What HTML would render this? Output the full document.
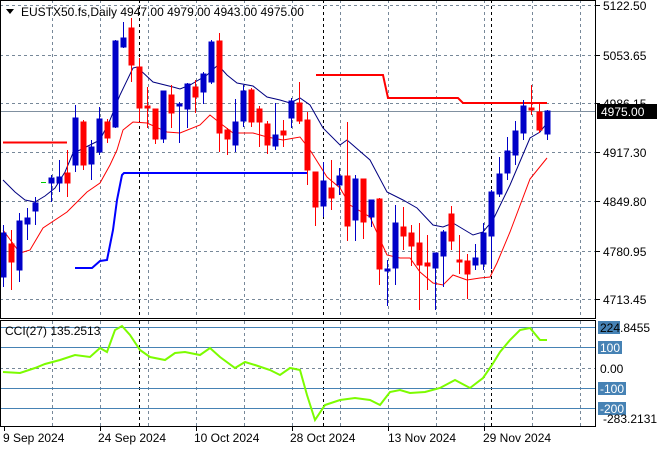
<!DOCTYPE html>
<html><head><meta charset="utf-8"><style>
body{margin:0;background:#fff;width:660px;height:450px;overflow:hidden;font-family:"Liberation Sans",sans-serif}
svg text{font-family:"Liberation Sans",sans-serif;font-size:12px;fill:#000}
</style></head><body>
<svg width="660" height="450" xmlns="http://www.w3.org/2000/svg">
<rect width="660" height="450" fill="#fff"/>
<g stroke="#778899" stroke-dasharray="3,3" stroke-width="1">
<line x1="52.5" y1="0" x2="52.5" y2="318"/><line x1="100.5" y1="0" x2="100.5" y2="318"/><line x1="148.5" y1="0" x2="148.5" y2="318"/><line x1="196.5" y1="0" x2="196.5" y2="318"/><line x1="244.5" y1="0" x2="244.5" y2="318"/><line x1="292.5" y1="0" x2="292.5" y2="318"/><line x1="340.5" y1="0" x2="340.5" y2="318"/><line x1="388.5" y1="0" x2="388.5" y2="318"/><line x1="436.5" y1="0" x2="436.5" y2="318"/><line x1="484.5" y1="0" x2="484.5" y2="318"/><line x1="532.5" y1="0" x2="532.5" y2="318"/><line x1="580.5" y1="0" x2="580.5" y2="318"/>
<line x1="52.5" y1="321" x2="52.5" y2="426"/><line x1="100.5" y1="321" x2="100.5" y2="426"/><line x1="148.5" y1="321" x2="148.5" y2="426"/><line x1="196.5" y1="321" x2="196.5" y2="426"/><line x1="244.5" y1="321" x2="244.5" y2="426"/><line x1="292.5" y1="321" x2="292.5" y2="426"/><line x1="340.5" y1="321" x2="340.5" y2="426"/><line x1="388.5" y1="321" x2="388.5" y2="426"/><line x1="436.5" y1="321" x2="436.5" y2="426"/><line x1="484.5" y1="321" x2="484.5" y2="426"/><line x1="532.5" y1="321" x2="532.5" y2="426"/><line x1="580.5" y1="321" x2="580.5" y2="426"/>
<line x1="0" y1="5.5" x2="596" y2="5.5"/><line x1="0" y1="55.5" x2="596" y2="55.5"/><line x1="0" y1="103.5" x2="596" y2="103.5"/><line x1="0" y1="152.5" x2="596" y2="152.5"/><line x1="0" y1="201.5" x2="596" y2="201.5"/><line x1="0" y1="251.5" x2="596" y2="251.5"/><line x1="0" y1="299.5" x2="596" y2="299.5"/>
<line x1="0" y1="368.5" x2="596" y2="368.5"/>
</g>
<g stroke="#000" stroke-dasharray="3,3" stroke-width="1">
<line x1="139.5" y1="0" x2="139.5" y2="318"/><line x1="323.5" y1="0" x2="323.5" y2="318"/><line x1="491.5" y1="0" x2="491.5" y2="318"/>
<line x1="139.5" y1="321" x2="139.5" y2="426"/><line x1="323.5" y1="321" x2="323.5" y2="426"/><line x1="491.5" y1="321" x2="491.5" y2="426"/>
</g>
<line x1="0" y1="111.5" x2="596" y2="111.5" stroke="#8090a0"/>
<g stroke="#4682b4"><line x1="0" y1="327.5" x2="596" y2="327.5"/><line x1="0" y1="347.5" x2="596" y2="347.5"/><line x1="0" y1="388.5" x2="596" y2="388.5"/><line x1="0" y1="408.5" x2="596" y2="408.5"/></g>
<!-- step lines -->
<polyline points="3,142.5 67,142.5" stroke="#f00" stroke-width="2" fill="none"/>
<polyline points="316,75 383,75 388,98 458,98 463,103 547,103" stroke="#f00" stroke-width="2" fill="none"/>
<polyline points="75,268 92,268 100,261 107,260 110,245 113,230 117,200 120,185 122,175 124,173 307,173" stroke="#00f" stroke-width="2" fill="none"/>
<!-- MAs -->
<polyline fill="none" stroke="#000080" stroke-width="1" points="3,180 15,192 25,200 35,202 45,196 55,188 65,172 73,153 80,150 90,145 100,140 110,120 120,95 133,68 137,67 153,82 173,87 180,89 190,85 207,75 218,65 227,75 237,83 253,86 267,97 280,100 290,103 300,98 310,105 323,128 340,145 347,140 370,160 387,192 403,200 417,208 433,225 443,227 453,223 473,235 483,232 493,220 510,185 530,138 540,132 547,123"/>
<polyline fill="none" stroke="#f00" stroke-width="1" points="3,230 20,253 30,250 43,228 67,212 87,192 100,183 110,165 117,150 123,130 133,122 147,123 167,132 180,133 200,125 210,115 220,123 233,133 253,133 267,137 283,140 300,137 310,150 327,177 340,188 350,205 370,217 387,255 400,258 410,258 420,272 433,283 443,285 453,275 467,280 480,278 490,277 497,263 510,232 530,179 547,158"/>
<!-- candles -->
<g stroke-width="1">
<g stroke="#0000c8" fill="#0000c8">
<line x1="3.5" y1="225" x2="3.5" y2="287"/><rect x="1" y="233" width="5" height="44"/>
<line x1="19.5" y1="213" x2="19.5" y2="282"/><rect x="17" y="221" width="5" height="49"/>
<line x1="27.5" y1="208" x2="27.5" y2="240"/><rect x="25" y="218" width="5" height="6"/>
<line x1="35.5" y1="197" x2="35.5" y2="225"/><rect x="33" y="203" width="5" height="8"/>
<line x1="51.5" y1="175" x2="51.5" y2="202"/><rect x="49" y="178" width="5" height="5"/>
<line x1="59.5" y1="160" x2="59.5" y2="192"/><rect x="57" y="177" width="5" height="6"/>
<line x1="75.5" y1="105" x2="75.5" y2="172"/><rect x="73" y="118" width="5" height="47"/>
<line x1="91.5" y1="140" x2="91.5" y2="180"/><rect x="89" y="147" width="5" height="17"/>
<line x1="99.5" y1="107" x2="99.5" y2="155"/><rect x="97" y="119" width="5" height="33"/>
<line x1="115.5" y1="40" x2="115.5" y2="128"/><rect x="113" y="41" width="5" height="86"/>
<line x1="123.5" y1="22" x2="123.5" y2="48"/><rect x="121" y="38" width="5" height="9"/>
<line x1="163.5" y1="91" x2="163.5" y2="143"/><rect x="161" y="91" width="5" height="48"/>
<line x1="179.5" y1="102" x2="179.5" y2="143"/><rect x="177" y="104" width="5" height="2"/>
<line x1="187.5" y1="83" x2="187.5" y2="128"/><rect x="185" y="84" width="5" height="25"/>
<line x1="203.5" y1="72" x2="203.5" y2="104"/><rect x="201" y="74" width="5" height="18"/>
<line x1="211.5" y1="40" x2="211.5" y2="84"/><rect x="209" y="42" width="5" height="40"/>
<line x1="235.5" y1="99" x2="235.5" y2="152"/><rect x="233" y="122" width="5" height="23"/>
<line x1="243.5" y1="85" x2="243.5" y2="127"/><rect x="241" y="91" width="5" height="30"/>
<line x1="275.5" y1="103" x2="275.5" y2="150"/><rect x="273" y="135" width="5" height="11"/>
<line x1="291.5" y1="98" x2="291.5" y2="128"/><rect x="289" y="101" width="5" height="17"/>
<line x1="323.5" y1="162" x2="323.5" y2="217"/><rect x="321" y="181" width="5" height="25"/>
<line x1="339.5" y1="168" x2="339.5" y2="195"/><rect x="337" y="176" width="5" height="9"/>
<line x1="355.5" y1="175" x2="355.5" y2="241"/><rect x="353" y="179" width="5" height="41"/>
<line x1="371.5" y1="200" x2="371.5" y2="227"/><rect x="369" y="200" width="5" height="17"/>
<line x1="387.5" y1="260" x2="387.5" y2="306"/><rect x="385" y="269" width="5" height="2"/>
<line x1="395.5" y1="205" x2="395.5" y2="285"/><rect x="393" y="223" width="5" height="45"/>
<line x1="435.5" y1="253" x2="435.5" y2="310"/><rect x="433" y="253" width="5" height="15"/>
<line x1="443.5" y1="230" x2="443.5" y2="287"/><rect x="441" y="232" width="5" height="24"/>
<line x1="475.5" y1="244" x2="475.5" y2="270"/><rect x="473" y="258" width="5" height="7"/>
<line x1="483.5" y1="223" x2="483.5" y2="270"/><rect x="481" y="233" width="5" height="31"/>
<line x1="491.5" y1="190" x2="491.5" y2="269"/><rect x="489" y="192" width="5" height="44"/>
<line x1="499.5" y1="157" x2="499.5" y2="197"/><rect x="497" y="174" width="5" height="20"/>
<line x1="507.5" y1="137" x2="507.5" y2="180"/><rect x="505" y="151" width="5" height="22"/>
<line x1="515.5" y1="121" x2="515.5" y2="165"/><rect x="513" y="131" width="5" height="24"/>
<line x1="523.5" y1="100" x2="523.5" y2="140"/><rect x="521" y="106" width="5" height="27"/>
<line x1="547.5" y1="110" x2="547.5" y2="140"/><rect x="545" y="111" width="5" height="23"/>
</g>
<g stroke="#f00" fill="#f00">
<line x1="11.5" y1="230" x2="11.5" y2="290"/><rect x="9" y="244" width="5" height="18"/>
<line x1="67.5" y1="150" x2="67.5" y2="197"/><rect x="65" y="173" width="5" height="10"/>
<line x1="83.5" y1="120" x2="83.5" y2="170"/><rect x="81" y="122" width="5" height="43"/>
<line x1="107.5" y1="119" x2="107.5" y2="143"/><rect x="105" y="122" width="5" height="16"/>
<line x1="131.5" y1="18" x2="131.5" y2="82"/><rect x="129" y="28" width="5" height="37"/>
<line x1="139.5" y1="58" x2="139.5" y2="121"/><rect x="137" y="67" width="5" height="41"/>
<line x1="147.5" y1="87" x2="147.5" y2="128"/><rect x="145" y="106" width="5" height="2"/>
<line x1="155.5" y1="109" x2="155.5" y2="144"/><rect x="153" y="109" width="5" height="30"/>
<line x1="171.5" y1="85" x2="171.5" y2="128"/><rect x="169" y="95" width="5" height="18"/>
<line x1="195.5" y1="80" x2="195.5" y2="113"/><rect x="193" y="87" width="5" height="10"/>
<line x1="219.5" y1="33" x2="219.5" y2="152"/><rect x="217" y="41" width="5" height="92"/>
<line x1="227.5" y1="128" x2="227.5" y2="155"/><rect x="225" y="130" width="5" height="9"/>
<line x1="251.5" y1="88" x2="251.5" y2="127"/><rect x="249" y="90" width="5" height="32"/>
<line x1="259.5" y1="106" x2="259.5" y2="147"/><rect x="257" y="109" width="5" height="13"/>
<line x1="267.5" y1="121" x2="267.5" y2="154"/><rect x="265" y="124" width="5" height="21"/>
<line x1="283.5" y1="120" x2="283.5" y2="147"/><rect x="281" y="131" width="5" height="4"/>
<line x1="299.5" y1="82" x2="299.5" y2="124"/><rect x="297" y="103" width="5" height="18"/>
<line x1="307.5" y1="112" x2="307.5" y2="185"/><rect x="305" y="120" width="5" height="50"/>
<line x1="315.5" y1="172" x2="315.5" y2="226"/><rect x="313" y="172" width="5" height="35"/>
<line x1="331.5" y1="160" x2="331.5" y2="210"/><rect x="329" y="188" width="5" height="10"/>
<line x1="347.5" y1="122" x2="347.5" y2="241"/><rect x="345" y="176" width="5" height="50"/>
<line x1="363.5" y1="179" x2="363.5" y2="239"/><rect x="361" y="179" width="5" height="43"/>
<line x1="379.5" y1="198" x2="379.5" y2="285"/><rect x="377" y="199" width="5" height="70"/>
<line x1="403.5" y1="207" x2="403.5" y2="250"/><rect x="401" y="227" width="5" height="9"/>
<line x1="411.5" y1="225" x2="411.5" y2="266"/><rect x="409" y="233" width="5" height="13"/>
<line x1="419.5" y1="223" x2="419.5" y2="310"/><rect x="417" y="243" width="5" height="22"/>
<line x1="427.5" y1="235" x2="427.5" y2="290"/><rect x="425" y="263" width="5" height="3"/>
<line x1="451.5" y1="206" x2="451.5" y2="250"/><rect x="449" y="214" width="5" height="27"/>
<line x1="459.5" y1="235" x2="459.5" y2="274"/><rect x="457" y="260" width="5" height="2"/>
<line x1="467.5" y1="254" x2="467.5" y2="299"/><rect x="465" y="261" width="5" height="13"/>
<line x1="531.5" y1="85" x2="531.5" y2="115"/><rect x="529" y="108" width="5" height="2"/>
<line x1="539.5" y1="104" x2="539.5" y2="133"/><rect x="537" y="112" width="5" height="18"/>
</g>
<line x1="41" y1="182.5" x2="46" y2="182.5" stroke="#0c0"/>
</g>
<!-- CCI -->
<polyline fill="none" stroke="#7cfc00" stroke-width="2" points="3,372 20,373 35,368 45,364 60,360 75,355 90,357 100,348 107,352 115,330 122,326 130,335 140,350 150,357 165,360 175,353 185,352 200,355 210,348 220,357 235,368 245,362 255,365 270,370 280,375 290,368 300,370 307,395 315,420 325,405 340,400 355,398 370,400 380,405 390,392 400,390 410,393 425,392 440,388 455,380 470,388 483,378 492,365 500,352 510,340 520,330 530,328 540,340 547,340"/>
<!-- borders -->
<rect x="0.5" y="0.5" width="595" height="318" fill="none" stroke="#000"/>
<rect x="0.5" y="320.5" width="595" height="106" fill="none" stroke="#000"/>
<g stroke="#000"><line x1="596" y1="5.5" x2="600" y2="5.5"/><line x1="596" y1="55.5" x2="600" y2="55.5"/><line x1="596" y1="103.5" x2="600" y2="103.5"/><line x1="596" y1="152.5" x2="600" y2="152.5"/><line x1="596" y1="201.5" x2="600" y2="201.5"/><line x1="596" y1="251.5" x2="600" y2="251.5"/><line x1="596" y1="299.5" x2="600" y2="299.5"/>
<line x1="4.5" y1="427" x2="4.5" y2="431"/><line x1="100.5" y1="427" x2="100.5" y2="431"/><line x1="196.5" y1="427" x2="196.5" y2="431"/><line x1="292.5" y1="427" x2="292.5" y2="431"/><line x1="388.5" y1="427" x2="388.5" y2="431"/><line x1="484.5" y1="427" x2="484.5" y2="431"/></g>
<!-- right labels -->
<text x="603" y="10">5122.50</text>
<text x="603" y="60">5053.65</text>
<text x="603" y="108">4986.15</text>
<text x="603" y="157">4917.30</text>
<text x="603" y="206">4849.80</text>
<text x="603" y="256">4780.95</text>
<text x="603" y="304">4713.45</text>
<rect x="597" y="104" width="60" height="15" fill="#000"/>
<text x="601" y="116" style="fill:#fff">4975.00</text>
<rect x="598" y="321" width="22" height="13" fill="#4682b4"/>
<text x="600" y="332">224.8455</text>
<rect x="598" y="341" width="24" height="13" fill="#4682b4"/>
<text x="600" y="352" style="fill:#fff">100</text>
<text x="600" y="373">0.00</text>
<rect x="598" y="382" width="28" height="13" fill="#4682b4"/>
<text x="600" y="393" style="fill:#fff">-100</text>
<rect x="598" y="402" width="28" height="13" fill="#4682b4"/>
<text x="600" y="413" style="fill:#fff">-200</text>
<text x="603" y="423">-283.2131</text>
<!-- bottom labels -->
<text x="3" y="442">9 Sep 2024</text>
<text x="98" y="442">24 Sep 2024</text>
<text x="194" y="442">10 Oct 2024</text>
<text x="290" y="442">28 Oct 2024</text>
<text x="388" y="442">13 Nov 2024</text>
<text x="483" y="442">29 Nov 2024</text>
<!-- header -->
<polygon points="6,9 14,9 10,14" fill="#000"/>
<text x="21" y="16">EUSTX50.fs,Daily  4947.00 4979.00 4943.00 4975.00</text>
<text x="5" y="335">CCI(27) 135.2513</text>
</svg>
</body></html>
